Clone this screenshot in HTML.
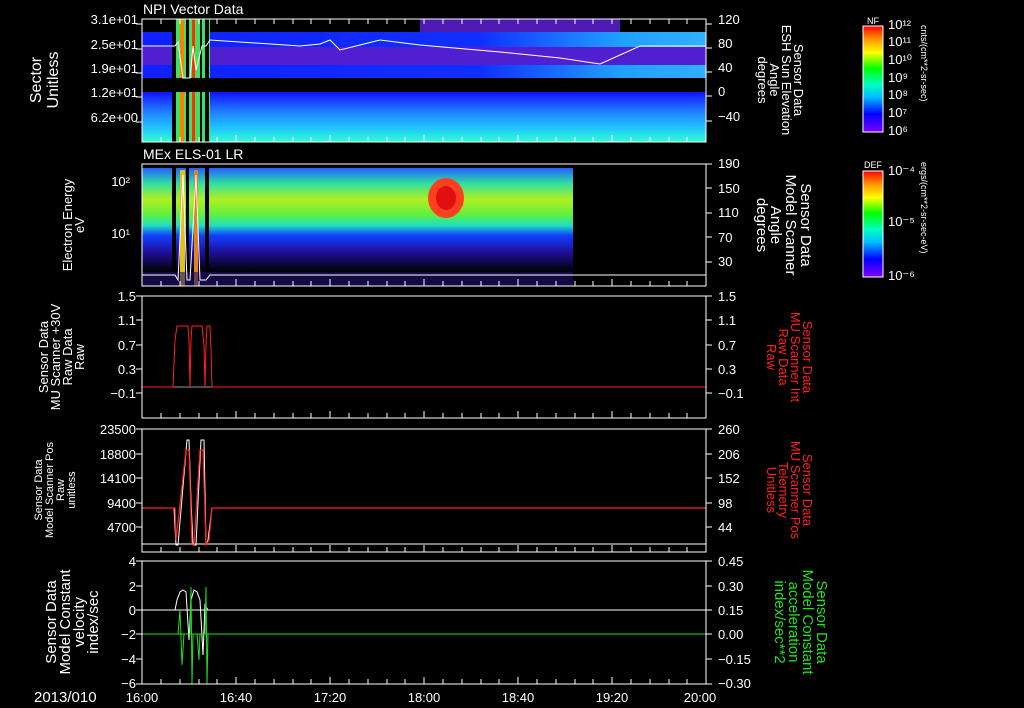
<!DOCTYPE html>
<html><head><meta charset="utf-8"><style>
html,body{margin:0;padding:0;background:#000;width:1024px;height:708px;overflow:hidden}
svg{display:block}
text{font-family:"Liberation Sans",sans-serif;fill:#fff;font-size:13px}
</style></head><body>
<svg width="1024" height="708" viewBox="0 0 1024 708">
<defs>
<linearGradient id="cb" x1="0" y1="1" x2="0" y2="0">
<stop offset="0" stop-color="#8000ff"/><stop offset="0.17" stop-color="#0000ff"/><stop offset="0.33" stop-color="#00c0ff"/><stop offset="0.45" stop-color="#00ffc0"/><stop offset="0.6" stop-color="#00ff00"/><stop offset="0.75" stop-color="#ffff00"/><stop offset="0.88" stop-color="#ff9000"/><stop offset="1" stop-color="#ff0000"/>
</linearGradient>
<linearGradient id="p1h" x1="0" y1="0" x2="1" y2="0">
<stop offset="0" stop-color="#1020ff"/><stop offset="0.6" stop-color="#1030ff"/><stop offset="0.85" stop-color="#20a0ff"/><stop offset="1" stop-color="#30b0ff"/>
</linearGradient>
<linearGradient id="p1l" x1="0" y1="0" x2="0" y2="1">
<stop offset="0" stop-color="#1010ff"/><stop offset="0.4" stop-color="#2080ff"/><stop offset="0.7" stop-color="#20c0ff"/><stop offset="1" stop-color="#30ffd0"/>
</linearGradient>
<linearGradient id="p2v" x1="0" y1="0" x2="0" y2="1">
<stop offset="0" stop-color="#2060ff"/><stop offset="0.15" stop-color="#30e0a0"/><stop offset="0.3" stop-color="#b0f020"/><stop offset="0.45" stop-color="#60f040"/><stop offset="0.55" stop-color="#20e0c0"/><stop offset="0.65" stop-color="#1040ff"/><stop offset="0.8" stop-color="#2010a0"/><stop offset="1" stop-color="#000"/>
</linearGradient>
</defs>

<!-- Panel 1 -->
<rect x="142" y="32" width="564" height="15" fill="url(#p1h)"/>
<rect x="142" y="47" width="564" height="18" fill="#5020d0"/>
<rect x="142" y="65" width="564" height="13" fill="url(#p1h)"/>
<rect x="142" y="92" width="564" height="50" fill="url(#p1l)"/>
<rect x="420" y="19" width="200" height="13" fill="#6020e0" opacity="0.8"/>
<rect x="175" y="19" width="35" height="123" fill="#40e060"/>
<rect x="180" y="19" width="4" height="123" fill="#ff8000"/>
<rect x="192" y="19" width="3" height="123" fill="#ff3000"/>
<rect x="172" y="19" width="4" height="123" fill="#000"/>
<rect x="186" y="19" width="3" height="123" fill="#000"/>
<rect x="200" y="19" width="2" height="123" fill="#000"/>
<rect x="205" y="19" width="4" height="123" fill="#000"/>
<rect x="142" y="78" width="564" height="14" fill="#000"/>
<polyline points="142,46 175,46 178,42 183,78 190,78 193,46 196,70 202,46 206,46 210,40 300,46 320,44 330,40 340,50 360,45 380,40 420,45 500,52 560,58 600,64 620,55 640,46 706,46" fill="none" stroke="#fff" stroke-width="1"/>
<rect x="142" y="19" width="564" height="123" fill="none" stroke="#fff"/>
<text x="143" y="14" style="font-size:14px">NPI Vector Data</text>
<g text-anchor="end"><text x="138" y="24">3.1e+01</text><text x="138" y="49">2.5e+01</text><text x="138" y="73">1.9e+01</text><text x="138" y="97">1.2e+01</text><text x="138" y="122">6.2e+00</text></g>
<g text-anchor="start"><text x="718" y="24">120</text><text x="718" y="48">80</text><text x="718" y="72">40</text><text x="718" y="96">0</text><text x="718" y="121">−40</text></g>
<text transform="translate(41,80) rotate(-90)" text-anchor="middle" style="font-size:16px">Sector</text>
<text transform="translate(58,80) rotate(-90)" text-anchor="middle" style="font-size:16px">Unitless</text>
<text transform="translate(794,80) rotate(90)" text-anchor="middle">Sensor Data</text>
<text transform="translate(782,80) rotate(90)" text-anchor="middle">ESH Sun Elevation</text>
<text transform="translate(770,80) rotate(90)" text-anchor="middle">Angle</text>
<text transform="translate(758,80) rotate(90)" text-anchor="middle">degrees</text>

<!-- Panel 2 -->
<rect x="142" y="168" width="431" height="104" fill="url(#p2v)"/>
<ellipse cx="446" cy="198" rx="18" ry="20" fill="#ff4020"/>
<ellipse cx="446" cy="198" rx="10" ry="12" fill="#e01010"/>
<rect x="172" y="164" width="4" height="122" fill="#000"/>
<rect x="186" y="164" width="3" height="122" fill="#000"/>
<rect x="205" y="164" width="4" height="122" fill="#000"/>
<rect x="180" y="170" width="5" height="116" fill="#e0c020"/>
<rect x="194" y="170" width="4" height="116" fill="#e08020"/>
<rect x="142" y="272" width="431" height="14" fill="#201070" opacity="0.6"/>
<polyline points="142,275 175,275 178,280 183,175 187,280 190,280 196,175 200,280 206,280 210,275 706,275" fill="none" stroke="#fff"/>
<rect x="142" y="164" width="564" height="122" fill="none" stroke="#fff"/>
<text x="143" y="159" style="font-size:14px">MEx ELS-01 LR</text>
<text x="130" y="186" text-anchor="end">10²</text><text x="130" y="238" text-anchor="end">10¹</text>
<g><text x="718" y="168">190</text><text x="718" y="193">150</text><text x="718" y="217">110</text><text x="718" y="242">70</text><text x="718" y="266">30</text></g>
<text transform="translate(72,225) rotate(-90)" text-anchor="middle">Electron Energy</text>
<text transform="translate(84,225) rotate(-90)" text-anchor="middle">eV</text>
<text transform="translate(801,225) rotate(90)" text-anchor="middle" style="font-size:15px">Sensor Data</text>
<text transform="translate(786,225) rotate(90)" text-anchor="middle" style="font-size:15px">Model Scanner</text>
<text transform="translate(771,225) rotate(90)" text-anchor="middle" style="font-size:15px">Angle</text>
<text transform="translate(757,225) rotate(90)" text-anchor="middle" style="font-size:15px">degrees</text>

<!-- Panel 3 -->
<line x1="142" y1="387" x2="706" y2="387" stroke="#999"/>
<polyline points="142,387 173,387 175,340 177,326 188,326 189,340 190,387 191,340 192,326 202,326 204,345 205,387 206,345 207,326 210,326 211,350 212,387 706,387" fill="none" stroke="#ff2020"/>
<rect x="142" y="296" width="564" height="122" fill="none" stroke="#fff"/>
<g text-anchor="end"><text x="136" y="301">1.5</text><text x="136" y="325">1.1</text><text x="136" y="350">0.7</text><text x="136" y="374">0.3</text><text x="136" y="398">−0.1</text></g>
<g><text x="718" y="301">1.5</text><text x="718" y="325">1.1</text><text x="718" y="350">0.7</text><text x="718" y="374">0.3</text><text x="718" y="398">−0.1</text></g>
<text transform="translate(48,357) rotate(-90)" text-anchor="middle">Sensor Data</text>
<text transform="translate(60,357) rotate(-90)" text-anchor="middle">MU Scanner +30V</text>
<text transform="translate(72,357) rotate(-90)" text-anchor="middle">Raw Data</text>
<text transform="translate(84,357) rotate(-90)" text-anchor="middle">Raw</text>
<text transform="translate(803,357) rotate(90)" text-anchor="middle" style="fill:#ff2020">Sensor Data</text>
<text transform="translate(791,357) rotate(90)" text-anchor="middle" style="fill:#ff2020">MU Scanner Int</text>
<text transform="translate(779,357) rotate(90)" text-anchor="middle" style="fill:#ff2020">Raw Data</text>
<text transform="translate(767,357) rotate(90)" text-anchor="middle" style="fill:#ff2020">Raw</text>

<!-- Panel 4 -->
<line x1="142" y1="544" x2="706" y2="544" stroke="#fff"/>
<polyline points="142,508 174,508 176,545 178,545 187,440 189,440 191,500 193,545 196,545 201,440 204,440 206,545 208,540 212,508 706,508" fill="none" stroke="#fff"/>
<polyline points="142,508 175,508 176,540 186,450 189,450 192,545 194,545 200,450 203,450 206,545 209,540 212,508 706,508" fill="none" stroke="#ff2020" stroke-width="1.2"/>
<rect x="142" y="429" width="564" height="123" fill="none" stroke="#fff"/>
<g text-anchor="end"><text x="136" y="434">23500</text><text x="136" y="459">18800</text><text x="136" y="483">14100</text><text x="136" y="508">9400</text><text x="136" y="532">4700</text></g>
<g><text x="718" y="434">260</text><text x="718" y="459">206</text><text x="718" y="483">152</text><text x="718" y="508">98</text><text x="718" y="532">44</text></g>
<text transform="translate(42,490) rotate(-90)" text-anchor="middle" style="font-size:11px">Sensor Data</text>
<text transform="translate(53,490) rotate(-90)" text-anchor="middle" style="font-size:11px">Model Scanner Pos</text>
<text transform="translate(64,490) rotate(-90)" text-anchor="middle" style="font-size:11px">Raw</text>
<text transform="translate(75,490) rotate(-90)" text-anchor="middle" style="font-size:11px">unitless</text>
<text transform="translate(803,490) rotate(90)" text-anchor="middle" style="fill:#ff2020">Sensor Data</text>
<text transform="translate(791,490) rotate(90)" text-anchor="middle" style="fill:#ff2020">MU Scanner Pos</text>
<text transform="translate(779,490) rotate(90)" text-anchor="middle" style="fill:#ff2020">Telemetry</text>
<text transform="translate(767,490) rotate(90)" text-anchor="middle" style="fill:#ff2020">Unitless</text>

<!-- Panel 5 -->
<line x1="142" y1="610" x2="706" y2="610" stroke="#fff"/>
<line x1="142" y1="634" x2="706" y2="634" stroke="#20e020"/>
<polyline points="175,610 177,600 180,592 183,590 186,592 189,640 191,600 194,590 197,592 200,600 203,655 205,605 208,610" fill="none" stroke="#fff"/>
<polyline points="178,634 180,610 182,665 184,634 190,634 191,587 192,684 193,634 197,634 199,660 200,634 205,634 206,587 207,684 208,634" fill="none" stroke="#20e020"/>
<rect x="142" y="561" width="564" height="123" fill="none" stroke="#fff"/>
<g text-anchor="end"><text x="136" y="566">4</text><text x="136" y="591">2</text><text x="136" y="615">0</text><text x="136" y="639">−2</text><text x="136" y="664">−4</text><text x="136" y="688">−6</text></g>
<g><text x="718" y="566">0.45</text><text x="718" y="591">0.30</text><text x="718" y="615">0.15</text><text x="718" y="639">0.00</text><text x="718" y="664">−0.15</text><text x="718" y="688">−0.30</text></g>
<text transform="translate(56,622) rotate(-90)" text-anchor="middle" style="font-size:15px">Sensor Data</text>
<text transform="translate(70,622) rotate(-90)" text-anchor="middle" style="font-size:15px">Model Constant</text>
<text transform="translate(84,622) rotate(-90)" text-anchor="middle" style="font-size:15px">velocity</text>
<text transform="translate(98,622) rotate(-90)" text-anchor="middle" style="font-size:15px">index/sec</text>
<text transform="translate(817,622) rotate(90)" text-anchor="middle" style="fill:#20e020;font-size:15px">Sensor Data</text>
<text transform="translate(803,622) rotate(90)" text-anchor="middle" style="fill:#20e020;font-size:15px">Model Constant</text>
<text transform="translate(789,622) rotate(90)" text-anchor="middle" style="fill:#20e020;font-size:15px">acceleration</text>
<text transform="translate(775,622) rotate(90)" text-anchor="middle" style="fill:#20e020;font-size:15px">index/sec**2</text>

<!-- tick marks -->
<g stroke="#fff" stroke-width="1">
<path d="M161,19v5M180,19v5M199,19v5M217,19v5M236,19v5M255,19v5M274,19v5M293,19v5M311,19v5M330,19v5M349,19v5M368,19v5M387,19v5M405,19v5M424,19v5M443,19v5M462,19v5M481,19v5M499,19v5M518,19v5M537,19v5M556,19v5M575,19v5M593,19v5M612,19v5M631,19v5M650,19v5M669,19v5M687,19v5"/>
</g>
<g id="tk" stroke="#fff">
<path d="M161,142v-5M180,142v-5M199,142v-5M217,142v-5M236,142v-7M255,142v-5M274,142v-5M293,142v-5M311,142v-5M330,142v-7M349,142v-5M368,142v-5M387,142v-5M405,142v-5M424,142v-7M443,142v-5M462,142v-5M481,142v-5M499,142v-5M518,142v-7M537,142v-5M556,142v-5M575,142v-5M593,142v-5M612,142v-7M631,142v-5M650,142v-5M669,142v-5M687,142v-5"/>
</g>
<use href="#tk" y="144"/><use href="#tk" y="276"/><use href="#tk" y="410"/><use href="#tk" y="542"/>
<g stroke="#fff"><path d="M142,24h-6M142,49h-6M142,73h-6M142,97h-6M142,122h-6M706,24h6M706,48h6M706,72h6M706,96h6M706,121h6M142,296h-6M142,320h-6M142,345h-6M142,369h-6M142,393h-6M706,296h6M706,320h6M706,345h6M706,369h6M706,393h6M142,429h-6M142,454h-6M142,478h-6M142,503h-6M142,527h-6M706,429h6M706,454h6M706,478h6M706,503h6M706,527h6M142,561h-6M142,586h-6M142,610h-6M142,634h-6M142,659h-6M142,684h-6M706,561h6M706,586h6M706,610h6M706,634h6M706,659h6M706,684h6M706,164h6M706,188h6M706,213h6M706,237h6M706,262h6"/></g>

<!-- time axis -->
<text x="34" y="702" style="font-size:15px">2013/010</text>
<g text-anchor="middle" style="font-size:15px"><text x="142" y="702">16:00</text><text x="236" y="702">16:40</text><text x="330" y="702">17:20</text><text x="424" y="702">18:00</text><text x="518" y="702">18:40</text><text x="612" y="702">19:20</text><text x="700" y="702">20:00</text></g>

<!-- colorbars -->
<rect x="863" y="26" width="20" height="106" fill="url(#cb)" stroke="#fff"/>
<text x="873" y="24" text-anchor="middle" style="font-size:9px">NF</text>
<g style="font-size:9px"><text x="888" y="29">10¹²</text><text x="888" y="46">10¹¹</text><text x="888" y="64">10¹⁰</text><text x="888" y="82">10⁹</text><text x="888" y="99">10⁸</text><text x="888" y="117">10⁷</text><text x="888" y="135">10⁶</text></g>
<text transform="translate(921,25) rotate(90)" style="font-size:9px">cnts/(cm**2-sr-sec)</text>
<rect x="863" y="171" width="20" height="106" fill="url(#cb)" stroke="#fff"/>
<text x="873" y="168" text-anchor="middle" style="font-size:9px">DEF</text>
<g style="font-size:9px"><text x="888" y="175">10⁻⁴</text><text x="888" y="226">10⁻⁵</text><text x="888" y="280">10⁻⁶</text></g>
<text transform="translate(921,162) rotate(90)" style="font-size:9px">ergs/(cm**2-sr-sec-eV)</text>
</svg>
</body></html>
